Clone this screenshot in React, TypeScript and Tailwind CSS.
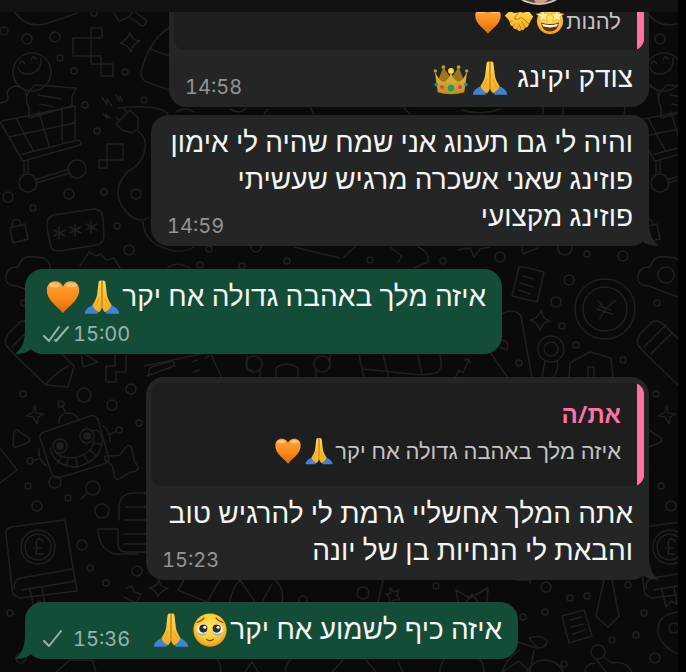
import type { ReactNode } from "react";
import clsx from "clsx";

type EmojiName = "heart" | "pray" | "crown" | "starStruck" | "handshake" | "pleading";

const EMOJI_LABELS: Record<EmojiName, string> = {
  heart: "לב כתום",
  pray: "ידיים צמודות",
  crown: "כתר",
  starStruck: "פרצוף נלהב",
  handshake: "לחיצת יד",
  pleading: "פרצוף מתחנן",
};

const EMOJI_ART: Record<EmojiName, ReactNode> = {
  heart: (
    <>
      <path
        d="M20 37C16 31 3 24 3 12.500C3 7 7 3.500 11.500 3.500C15.500 3.500 18.500 5.500 20 9C21.500 5.500 24.500 3.500 28.500 3.500C33 3.500 37 7 37 12.500C37 24 24 31 20 37Z"
        fill="url(#heartFill)"
      />
      <ellipse cx="11" cy="7.500" rx="5.500" ry="2.200" fill="#ffd9a0" opacity=".6" />
      <ellipse cx="29" cy="7.500" rx="5.500" ry="2.200" fill="#ffd9a0" opacity=".6" />
    </>
  ),
  pray: (
    <>
      <path d="M2 37C2 33 7 30 12 28L18 33L15 37.500H2Z" fill="#3f83d2" />
      <path d="M38 37C38 33 33 30 28 28L22 33L25 37.500H38Z" fill="#3f83d2" />
      <path d="M19.800 3C17.500 2 16.400 3.500 16.200 6L14.800 18C14 23 11 26.500 10 28.500C11 32 14 35 17 36C19 34 20 32 20 29Z" fill="url(#handFill)" />
      <path d="M20.200 3C22.500 2 23.600 3.500 23.800 6L25.200 18C26 23 29 26.500 30 28.500C29 32 26 35 23 36C21 34 20 32 20 29Z" fill="url(#handFill)" />
      <path d="M20 3.500V30" stroke="#c6781a" strokeWidth="1.200" />
      <path d="M17 21Q15.500 26 13 29M23 21Q24.500 26 27 29" stroke="#e09a1f" strokeWidth="1" fill="none" />
    </>
  ),
  crown: (
    <>
      <path d="M5 25L12 9L20 20L28 9L35 25L33 30H7Z" fill="#a0741c" />
      <path
        d="M3 13Q8 25 13 24Q18 22 20 14Q22 22 27 24Q32 25 37 13L34 35Q20 39 6 35Z"
        fill="url(#crownFill)"
      />
      <g fill="#c9982c">
        <circle cx="3.500" cy="12.500" r="1.800" />
        <circle cx="12" cy="8.500" r="2" />
        <circle cx="28" cy="8.500" r="2" />
        <circle cx="36.500" cy="12.500" r="1.800" />
      </g>
      <circle cx="20" cy="12.500" r="3" fill="#ffe23f" />
      <ellipse cx="20" cy="30.500" rx="3.200" ry="3.400" fill="#13a06f" />
      <circle cx="10.500" cy="29.500" r="2.100" fill="#d93a8c" />
      <circle cx="29.500" cy="29.500" r="2.100" fill="#d93a8c" />
      <circle cx="4.500" cy="27" r="1.900" fill="#13a06f" />
      <circle cx="35.500" cy="27" r="1.900" fill="#13a06f" />
    </>
  ),
  starStruck: (
    <>
      <circle cx="20" cy="20" r="17.500" fill="url(#faceFill)" />
      <path d="M8 22Q20 26 32 22Q31 34 20 34Q9 34 8 22Z" fill="#6b3410" />
      <path d="M9.500 23.500Q20 27 30.500 23.500L29.500 27Q20 30 10.500 27Z" fill="#fff" />
      <path d="M11 4L13 10L19.500 10.500L14.500 14.500L16.500 21L11 17.500L5 20.500L7 14.500L1.500 10.500L8.500 10Z" fill="#ffedb0" stroke="#d9931e" strokeWidth=".8" />
      <path d="M29 4L31.500 10L38.500 10.500L33 14.500L35 20.500L29 17.500L23.500 21L25.500 14.500L20.500 10.500L27 10Z" fill="#ffedb0" stroke="#d9931e" strokeWidth=".8" />
    </>
  ),
  handshake: (
    <>
      <path
        d="M1 13L8 6Q12 10 17 9L22 8Q28 10 32 6L39 14Q35 20 33 25Q32 29 28 29Q27 33 23 32Q20 35 17 31Q12 31 12 27Q8 27 8 22Q6 17 1 13Z"
        fill="url(#handFill)"
      />
      <path
        d="M19 10Q14 13 14 17Q18 20 23 15Q28 18 33 24M24 21L28 28M20 24L23 31"
        stroke="#b8770f"
        strokeWidth="1.200"
        fill="none"
        strokeLinecap="round"
      />
      <path d="M12 27L15 23M8 22L11 19M17 31L19 27" stroke="#b8770f" strokeWidth="1" fill="none" />
    </>
  ),
  pleading: (
    <>
      <circle cx="20" cy="20" r="17.500" fill="url(#faceFill)" />
      <path d="M6.500 12Q11 11 13.500 7.500M33.500 12Q29 11 26.500 7.500" stroke="#8a4b12" strokeWidth="1.500" fill="none" strokeLinecap="round" />
      <circle cx="12" cy="19" r="5.500" fill="#fff" />
      <circle cx="28" cy="19" r="5.500" fill="#fff" />
      <circle cx="13" cy="18.500" r="4.300" fill="#3c2b20" />
      <circle cx="27" cy="18.500" r="4.300" fill="#3c2b20" />
      <circle cx="14.500" cy="17" r="1.600" fill="#fff" />
      <circle cx="28.500" cy="17" r="1.600" fill="#fff" />
      <path d="M7.500 22.500Q12 25 16.500 22.500Q16 26 12 26Q8.500 26 7.500 22.500ZM23.500 22.500Q28 25 32.500 22.500Q31.500 26 28 26Q24 26 23.500 22.500Z" fill="#62c7e8" />
      <path d="M16.500 30Q20 32.500 23.500 30" stroke="#8a4b12" strokeWidth="1.500" fill="none" strokeLinecap="round" />
    </>
  ),
};

const Emoji = ({ name, small }: { name: EmojiName; small?: boolean }) => (
  <svg
    viewBox="0 0 40 40"
    role="img"
    aria-label={EMOJI_LABELS[name]}
    className={clsx("-mt-2 mr-[1px] -mb-1 inline-block", small ? "size-[30px]" : "size-[38px]")}
  >
    {EMOJI_ART[name]}
  </svg>
);

const Gradients = () => (
  <svg className="absolute size-0" aria-hidden="true">
    <defs>
      <linearGradient id="heartFill" x1="0" y1="0" x2="0" y2="1">
        <stop offset="0" stopColor="#ffa63d" />
        <stop offset=".5" stopColor="#fb8c1c" />
        <stop offset="1" stopColor="#dc6a0b" />
      </linearGradient>
      <linearGradient id="handFill" x1="0" y1="0" x2="0" y2="1">
        <stop offset="0" stopColor="#ffd84f" />
        <stop offset="1" stopColor="#f5ab1e" />
      </linearGradient>
      <linearGradient id="crownFill" x1="0" y1="0" x2="0" y2="1">
        <stop offset="0" stopColor="#e6bf42" />
        <stop offset="1" stopColor="#c08c1c" />
      </linearGradient>
      <radialGradient id="faceFill" cx=".5" cy=".4" r=".6">
        <stop offset="0" stopColor="#ffe95c" />
        <stop offset=".7" stopColor="#fdc62f" />
        <stop offset="1" stopColor="#ee981b" />
      </radialGradient>
    </defs>
  </svg>
);

// x, y, radius of the loose bubbles in the wallpaper
const DOTS = [
  [94, 13, 3], [4, 31, 4], [27, 39, 5], [55, 37, 5], [60, 58, 3], [74, 71, 3], [125, 72, 3],
  [144, 100, 3], [85, 105, 3], [97, 131, 3], [8, 197, 5], [69, 194, 5], [104, 192, 3],
  [136, 194, 5], [33, 208, 3], [117, 226, 3], [129, 250, 5], [209, 249, 3], [256, 247, 5],
  [370, 260, 3], [443, 261, 3], [500, 257, 5], [565, 248, 7], [587, 254, 3], [623, 256, 5],
  [200, 265, 3], [242, 266, 3], [287, 261, 3], [569, 280, 5], [556, 302, 5], [562, 326, 3],
  [576, 345, 3], [519, 363, 3], [623, 360, 3], [23, 394, 3], [84, 395, 7], [131, 389, 5],
  [112, 405, 5], [139, 423, 3], [28, 486, 3], [68, 498, 3], [37, 506, 5], [102, 511, 7],
  [93, 488, 7], [82, 545, 5], [90, 568, 3], [106, 583, 3], [137, 571, 5], [10, 613, 3],
  [21, 658, 5], [363, 593, 6], [436, 586, 3], [546, 587, 5], [570, 598, 3], [587, 596, 3],
  [628, 585, 3], [523, 617, 3], [545, 612, 3], [612, 640, 3], [636, 635, 3], [644, 613, 3],
  [655, 658, 5], [564, 664, 3], [303, 600, 4], [657, 303, 3], [24, 303, 3],
  [656, 394, 3], [661, 486, 3], [671, 506, 5], [660, 39, 5],
];

const Wallpaper = () => (
  <svg
    className="absolute top-0 left-0 h-[672px] w-full"
    fill="none"
    stroke="#202020"
    strokeWidth="1.500"
    strokeLinecap="round"
    strokeLinejoin="round"
    aria-hidden="true"
  >
    {DOTS.map(([x, y, r]) => (
      <circle key={`${x}-${y}`} cx={x} cy={y} r={r} />
    ))}
    {/* left tile, repeated at the right edge */}
    <g id="tile">
      <path d="M15 12Q25 28 45 24L78 13" />
      <circle cx="32" cy="72" r="19" />
      <path d="M18 67Q20 75 30 74Q42 71 41 58M19 64Q22 58 25 64M31 60Q34 54 36 59" />
      <path d="M0 103Q8 102 8 98Q5 88 16 86Q27 88 26 96" />
      <path d="M29 107Q22 96 35 85L76 88L72 97V106L29 118ZM38 95L62 99M40 104L53 107" />
      <path d="M0 122L23 161L80 145Q83 142 78 140L23 154M2 121L75 106V139M16 118L33 150M39 112L49 146M62 108V142M9 137L74 123" />
      <path d="M24 162V174M28 161V174M35 180L69 169M36 183L70 173" />
      <circle cx="28" cy="183" r="9" />
      <circle cx="77" cy="169" r="9" />
      <path d="M10 228L25 224L28 239L13 243ZM12 227V223Q15 217 20 221L21 225" />
      <path d="M17 286Q4 286 6 275Q8 266 18 267Q22 254 36 257Q51 257 50 270L80 281M17 286L46 297Q60 299 66 294" />
      <path d="M6 345Q4 338 10 332L20 322Q25 319 31 324L74 366L68 387L46 385L10 350ZM12 347L34 325M19 354L40 333M46 384Q57 372 68 366" />
      <path d="M35 405L36 413L44 414L38 417L37 424L33 417L26 416L33 412Z" />
      <path d="M14 432Q16 428 20 432L29 438Q31 441 27 443L17 447Q13 448 13 444Z" />
      <path d="M0 448L17 470L0 483" />
      <path d="M11 527L65 520L77 591L20 598Q12 596 12 589L6 534Q5 529 11 527ZM14 589Q13 580 21 578L73 569M22 590L75 581M30 590L34 607L39 601L45 604L42 588" />
      <circle cx="38" cy="547" r="17" />
      <circle cx="38" cy="547" r="13" />
      <path d="M43 542Q41 537 37 540Q35 544 37 548L36 554H43M33 548H41" />
    </g>
    <use href="#tile" x="632" />
    <circle cx="666" cy="275" r="8" />
    <path d="M91 28H102V38H91ZM91 38H73V56H91ZM91 38V64H101V56H91M101 64H113V76H101Z" />
    <path d="M130 32Q131 40 140 41Q132 44 131 52Q128 45 120 43Q128 40 130 32Z" />
    <path d="M114 13L119 21L129 17L132 12M131 18L142 26Q147 25 146 20L135 12" />
    <path d="M169 28Q149 40 141 72Q141 80 147 82L169 90M150 49L169 56" />
    <path d="M102 97L107 105V99L112 106M116 95L119 101L120 96L122 101M103 114L107 118L106 114L110 118" />
    <path d="M116 124L130 110L138 118V129L132 133L122 130ZM119 120L116 117M127 112L124 109" />
    <path d="M138 131Q150 140 142 158Q138 166 127 172Q112 190 122 206Q136 226 148 218" />
    <path d="M107 144H123V160H107ZM99 160H107V168H99Z" />
    <path d="M54 215L94 209Q102 209 103 218L104 236Q104 243 97 245L60 251Q51 252 50 243L47 227Q46 217 54 215Z" />
    <path d="M59 227V239M54 230L65 236M65 230L54 236M75 224V236M70 227L81 233M81 227L70 233M91 221V233M86 224L97 230M97 224L86 230" />
    <path d="M143 222Q144 245 175 251Q188 252 195 246" />
    <path d="M80 266L89 252L96 256L101 254L106 260L114 258L120 268M168 267Q178 261 190 268" />
    <path d="M294 247L340 258M343 258L355 247M390 247L402 256L398 262M418 247Q430 252 428 262L414 268M458 250L466 248M464 249L470 248L474 257L480 249L490 247M522 247L523 254L538 248" />
    <path d="M525 267L544 272L537 302L512 296L519 267ZM523 276L534 279M520 283L534 287M519 290L530 294" />
    <circle cx="605" cy="309" r="30" />
    <circle cx="605" cy="309" r="22" />
    <path d="M598 301L605 309L616 300M605 309L600 319M597 309L612 314M599 306L611 310" />
    <path d="M541 310Q542 319 550 321Q542 322 540 331Q538 323 530 320Q538 319 541 310Z" />
    <circle cx="551" cy="349" r="13" />
    <circle cx="551" cy="349" r="7" />
    <path d="M545 361L542 378M557 361Q559 370 553 378M502 314Q514 307 521 316L532 378M502 340Q510 342 507 350L500 347M490 352L508 378" />
    <path d="M569 378L570 363L590 352L611 358L613 378M588 378V367H594V378" />
    <path d="M359 355L364 378M383 355L389 378M418 355L422 375L363 369M440 355Q444 368 436 373L422 375M455 378L459 370L463 373L469 359M465 360L469 359L470 363" />
    <path d="M144 366L210 352L222 378M147 376L174 366Q176 362 171 361L151 367Q148 370 149 376M192 362L197 360M205 358L209 356M194 372L199 370" />
    <path d="M247 356V370H252M260 370V378H298V368Q286 360 276 368V378M316 368V378M330 356V368" />
    <circle cx="254" cy="364" r="8" />
    <circle cx="322" cy="364" r="8" />
    <path d="M81 352L83 367L98 362ZM115 354V366H106V382H116V372H126V354" />
    {/* robot */}
    <path d="M40 438Q39 434 44 432L90 416Q96 415 98 420L109 459Q109 462 104 464L58 478Q53 478 51 472ZM59 424Q58 414 69 413Q77 414 79 421M66 413L62 406M103 426Q111 432 110 442M111 434L117 431M39 449Q38 461 47 466M38 459L32 461" />
    <circle cx="61" cy="404" r="3" />
    <circle cx="119" cy="430" r="3" />
    <circle cx="30" cy="461" r="3" />
    <circle cx="60" cy="446" r="7" />
    <circle cx="87" cy="436" r="7" />
    <circle cx="60" cy="446" r="3" fill="#202020" />
    <circle cx="87" cy="436" r="3" fill="#202020" />
    <path d="M50 448Q55 467 77 467Q103 460 102 438Q99 427 92 431M55 452Q63 460 77 457Q92 453 94 441M61 457L58 463M68 459L66 466M76 458L77 466M84 455L88 463M90 450L97 456M94 443L102 445" />
    <circle cx="55" cy="482" r="6" />
    <path d="M126 447Q131 443 132 450L134 460L138 467Q138 472 131 472L119 479Q114 480 114 474L112 465L105 460Q103 455 110 456L120 455Z" />
    <path d="M87 493L81 499M119 520V505Q121 494 132 493H146M126 507H146M125 520H146M98 529H118V544Q118 552 126 552H146M98 529Q98 548 114 554H138M124 534H146M124 544H146" />
    <path d="M159 580Q160 588 168 588Q160 592 158 596Q156 590 149 588Q157 587 159 580ZM126 588L132 586L134 592L141 594L137 602M124 597L134 602" />
    <path d="M184 580L178 590L207 602L220 580M240 580Q232 588 230 602M240 580L255 602M275 580Q285 590 282 602M262 602L272 584" />
    <path d="M383 580L378 602M390 588L394 592L399 590L397 596L400 600L394 600L390 603L389 597L386 594L391 593Z" />
    <path d="M458 602L456 590L470 598L488 588L487 602M466 602L472 594L478 602" />
    <path d="M604 580L596 616L608 627L619 616L612 580M516 580H530V584M562 616L584 610L592 636L569 643ZM570 620L581 617M571 627L584 624M573 634L585 630" />
    <path d="M678 612Q656 614 658 634Q663 648 678 654M529 638Q540 634 547 640Q547 648 538 648ZM518 642L536 648M534 650L530 672M520 650Q508 656 502 672L519 661L530 672" />
    <circle cx="674" cy="628" r="5" />
    <circle cx="462" cy="672" r="22" />
    <circle cx="545" cy="680" r="20" />
    <circle cx="598" cy="652" r="7" />
    <path d="M596 659L606 672M585 672Q585 664 595 663M604 657L612 663Q626 660 632 672" />
    <path d="M56 672L70 660L92 660L96 672M218 660Q222 668 220 672M290 660Q284 668 286 672M245 672L252 662L258 672M332 672L343 660M398 662L403 672M366 660L376 672" />
    <path d="M118 108Q160 104 168 114M176 112Q186 106 194 112M230 109Q240 115 246 108M268 109L264 114M310 107L314 114M404 108L410 114M462 110Q480 116 500 109M543 107V114M563 107V114M625 107L624 114" />
  </svg>
);

const Checks = ({ read }: { read?: boolean }) => (
  <svg
    viewBox="0 0 26 18"
    className="h-[18px] w-[26px]"
    fill="none"
    stroke="currentColor"
    strokeWidth="2"
    strokeLinecap="round"
    strokeLinejoin="round"
    aria-label={read ? "נמסר" : "נשלח"}
    role="img"
  >
    {read ? <path d="M1 11L6 16L16 2M12 15L13 16L25 2" /> : <path d="M1 11L6 16L18 1" />}
  </svg>
);

const Tail = ({ sent }: { sent?: boolean }) => (
  <svg
    viewBox="0 0 20 24"
    className={clsx(
      "absolute bottom-0 h-6 w-5",
      sent ? "-left-[10px] -scale-x-100 text-[#144d37]" : "-right-[10px] text-[#242625]"
    )}
    fill="currentColor"
    aria-hidden="true"
  >
    <path d="M10 0C10 11 13 19 20 23.500C14 24.500 8 23 4 19L0 10Z" />
  </svg>
);

interface QuoteProps {
  author?: string;
  children: ReactNode;
}

const Quote = ({ author, children }: QuoteProps) => (
  <blockquote className="flex overflow-hidden rounded-[11px] bg-[#1e1e1e]">
    <div className="w-[7px] shrink-0 bg-[#ff72a4]" />
    <div
      className={clsx(
        "grow px-4 text-[22px] leading-[36px] text-[#c4c4c4]",
        author ? "pt-[13px] pb-[18px]" : "pt-1 pb-3"
      )}
    >
      {author && (
        <cite className="block text-2xl leading-[36px] font-semibold text-[#ff72a4] not-italic">
          {author}
        </cite>
      )}
      <p>{children}</p>
    </div>
  </blockquote>
);

interface BubbleProps {
  time: string;
  sent?: boolean;
  read?: boolean;
  tail?: boolean;
  stacked?: boolean;
  quote?: ReactNode;
  className: string;
  children: ReactNode;
}

const Bubble = ({ time, sent, read, tail, stacked, quote, className, children }: BubbleProps) => (
  <article
    className={clsx(
      "relative max-w-full rounded-[18px]",
      sent ? "self-end bg-[#144d37]" : "self-start bg-[#242625]",
      className
    )}
  >
    {tail && <Tail sent={sent} />}
    {quote && <div className="px-[5px] pt-[6px]">{quote}</div>}
    <div className={clsx("relative grid gap-y-1 py-2 pr-4", sent ? "pl-[18px]" : "pl-4")}>
      <p className="col-start-1 row-start-1 mb-1 text-[28px] leading-[37px] text-[#f4f6f5]">
        {children}
      </p>
      <div
        className={clsx(
          "col-start-1 flex items-center gap-1 self-end justify-self-end text-xl leading-6",
          stacked ? "row-start-2" : "row-start-1",
          sent ? "text-[#96b5a8]" : "text-[#939594]"
        )}
      >
        <time className="font-['Inter',sans-serif] tabular-nums">{time}</time>
        {sent && <Checks read={read} />}
      </div>
    </div>
  </article>
);

const App = () => {
  return (
    <div dir="rtl" lang="he" className="flex min-h-screen bg-black font-['Noto_Sans',sans-serif]">
      <Gradients />
      <div className="w-2 shrink-0" />
      <div className="relative flex min-w-0 grow flex-col overflow-hidden bg-[#0a0a0a]">
        <Wallpaper />
        <header className="relative flex h-3 shrink-0 items-end justify-start overflow-hidden bg-[#121212] pr-[117px]">
          <svg viewBox="0 0 44 12" className="h-3 w-11" aria-hidden="true">
            <circle cx="22" cy="-30" r="35" fill="#c9c4c2" />
            <circle cx="22" cy="-31" r="34" fill="#59443d" />
            <path d="M17 0H31L27 3H19Z" fill="#d39a7c" />
          </svg>
        </header>
        <main className="relative flex flex-col overflow-hidden pr-[29px] pb-[13px] pl-[25px]">
          <Bubble
            time="14:58"
            className="-mt-5 w-[480px]"
            quote={
              <Quote>
                להנות
                <Emoji name="starStruck" small />
                <Emoji name="handshake" small />
                <Emoji name="heart" small />
              </Quote>
            }
          >
            צודק יקינג <Emoji name="pray" />
            <Emoji name="crown" />
          </Bubble>
          <Bubble time="14:59" tail className="mt-2 w-[498px]">
            והיה לי גם תענוג אני שמח שהיה לי אימון
            <br />
            פוזינג שאני אשכרה מרגיש שעשיתי
            <br />
            פוזינג מקצועי
          </Bubble>
          <Bubble time="15:00" sent read tail stacked className="mt-[23px] w-[477px]">
            איזה מלך באהבה גדולה אח יקר
            <Emoji name="pray" />
            <Emoji name="heart" />
          </Bubble>
          <Bubble
            time="15:23"
            tail
            className="mt-[23px] w-[503px]"
            quote={
              <Quote author="את/ה">
                איזה מלך באהבה גדולה אח יקר
                <Emoji name="pray" small />
                <Emoji name="heart" small />
              </Quote>
            }
          >
            אתה המלך אחשליי גרמת לי להרגיש טוב
            <br />
            והבאת לי הנחיות בן של יונה
          </Bubble>
          <Bubble time="15:36" sent tail className="mt-[22px] w-[493px]">
            איזה כיף לשמוע אח יקר
            <Emoji name="pleading" />
            <Emoji name="pray" />
          </Bubble>
        </main>
      </div>
    </div>
  );
};

export default App;
